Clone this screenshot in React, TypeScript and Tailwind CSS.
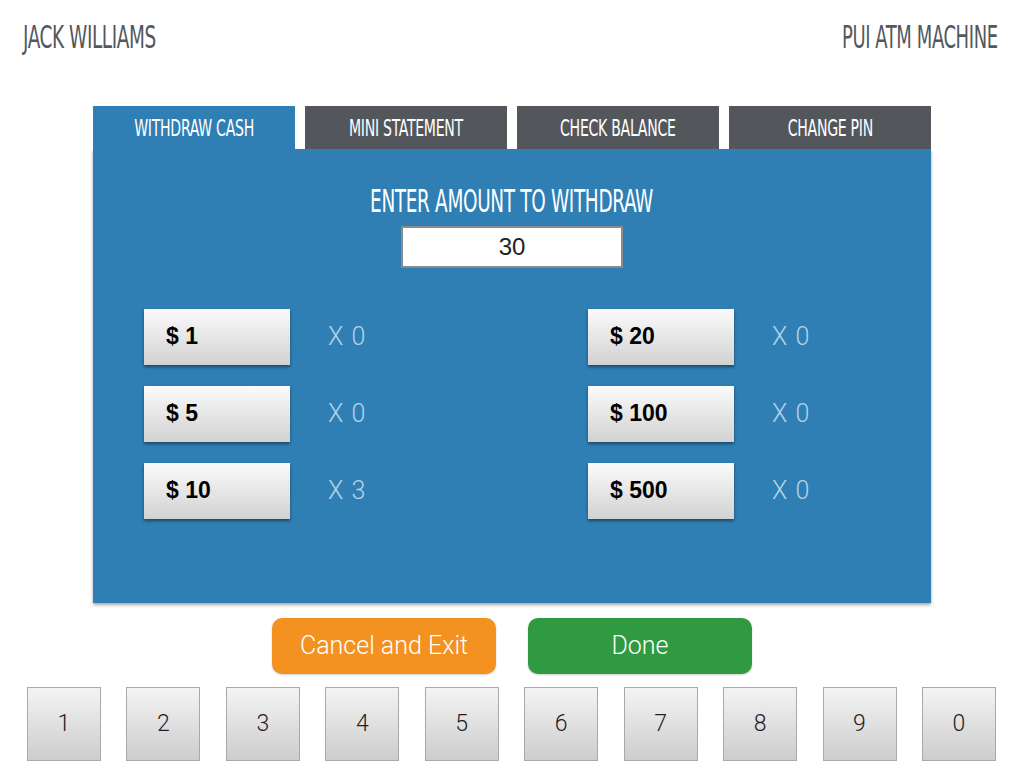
import React from "react";

const bebas = { fontFamily: '"Liberation Sans Narrow", "DejaVu Sans Condensed", "Roboto", sans-serif' };

function Cond({ children, className }: { children: React.ReactNode; className?: string }) {
  return (
    <span className={"inline-block whitespace-nowrap " + (className ?? "")} style={bebas}>
      {children}
    </span>
  );
}

const bills = [
  ["$ 1", "X 0", "$ 20", "X 0"],
  ["$ 5", "X 0", "$ 100", "X 0"],
  ["$ 10", "X 3", "$ 500", "X 0"],
];

const tabs = ["WITHDRAW CASH", "MINI STATEMENT", "CHECK BALANCE", "CHANGE PIN"];
const keys = ["1", "2", "3", "4", "5", "6", "7", "8", "9", "0"];

function BillButton({ label }: { label: string }) {
  return (
    <div
      className="w-[146px] h-[56px] flex items-center pl-[22px] bg-gradient-to-b from-[#fbfbfb] to-[#d2d2d2] shadow-[0_2px_3px_rgba(0,0,0,0.45)] text-[23px] font-bold text-black"
      style={{ fontFamily: '"Liberation Sans", Arial, sans-serif' }}
    >
      {label}
    </div>
  );
}

function Count({ label }: { label: string }) {
  return (
    <div
      className="ml-[38px] text-[25px] font-light text-[#b3d2e8] tracking-[1px]"
      style={{ fontFamily: 'Roboto, "Open Sans", sans-serif' }}
    >
      {label}
    </div>
  );
}

export default function App() {
  return (
    <div className="w-[1024px] h-[768px] bg-white relative overflow-hidden">
      <div className="flex justify-between items-start pl-[23px] pr-[26px] pt-[19px] h-[106px] text-[#54575c]">
        <Cond className="text-[25px] tracking-[-0.5px] origin-left scale-x-[0.82] scale-y-[1.25]">JACK WILLIAMS</Cond>
        <Cond className="text-[25px] tracking-[-0.5px] origin-right scale-x-[0.8] scale-y-[1.25]">PUI ATM MACHINE</Cond>
      </div>

      <div className="mx-[93px] w-[838px]">
        <div className="flex gap-[10px] h-[43px]">
          {tabs.map((t, i) => (
            <div
              key={t}
              className={
                "w-[202px] h-[43px] flex items-center justify-center text-white " +
                (i === 0 ? "bg-[#2f7fb5]" : "bg-[#53575c]")
              }
            >
              <Cond className="text-[17px] tracking-[-0.3px] origin-center scale-x-[0.92] scale-y-[1.3] translate-y-[1px]">{t}</Cond>
            </div>
          ))}
        </div>
        <div className="h-[454px] bg-[#2f7fb5] shadow-[0_2px_3px_rgba(0,0,0,0.35)] flex flex-col items-center pt-[34px]">
          <Cond className="text-white text-[25px] tracking-[-0.4px] origin-center scale-x-[0.82] scale-y-[1.25]">ENTER AMOUNT TO WITHDRAW</Cond>
          <div
            className="mt-[5px] w-[222px] h-[42px] bg-white border-2 border-[#8a8a8a] flex items-center justify-center text-[24px] text-[#222]"
            style={{ fontFamily: '"Liberation Sans", Arial, sans-serif' }}
          >
            30
          </div>
          <div className="self-stretch mt-[41px] pl-[51px] flex flex-col gap-[21px]">
            {bills.map((r) => (
              <div key={r[0]} className="flex items-center h-[56px]">
                <div className="flex items-center w-[444px]">
                  <BillButton label={r[0]} />
                  <Count label={r[1]} />
                </div>
                <div className="flex items-center">
                  <BillButton label={r[2]} />
                  <Count label={r[3]} />
                </div>
              </div>
            ))}
          </div>
        </div>
      </div>

      <div
        className="flex justify-center gap-[32px] mt-[15px]"
        style={{ fontFamily: 'Roboto, "Open Sans", sans-serif' }}
      >
        <div className="w-[224px] h-[56px] rounded-[10px] bg-[#f39220] flex items-center justify-center text-white text-[25px] font-light shadow-[0_1px_2px_rgba(0,0,0,0.2)]">
          Cancel and Exit
        </div>
        <div className="w-[224px] h-[56px] rounded-[10px] bg-[#2f9a41] flex items-center justify-center text-white text-[25px] font-light shadow-[0_1px_2px_rgba(0,0,0,0.2)]">
          Done
        </div>
      </div>

      <div
        className="flex justify-between pl-[27px] pr-[28px] mt-[13px]"
        style={{ fontFamily: 'Roboto, "Open Sans", sans-serif' }}
      >
        {keys.map((k) => (
          <div
            key={k}
            className="w-[74px] h-[74px] border border-[#a9a9a9] bg-gradient-to-b from-[#f4f4f4] to-[#cdcdcd] flex items-center justify-center text-[23px] font-light text-[#222]"
          >
            {k}
          </div>
        ))}
      </div>
    </div>
  );
}
